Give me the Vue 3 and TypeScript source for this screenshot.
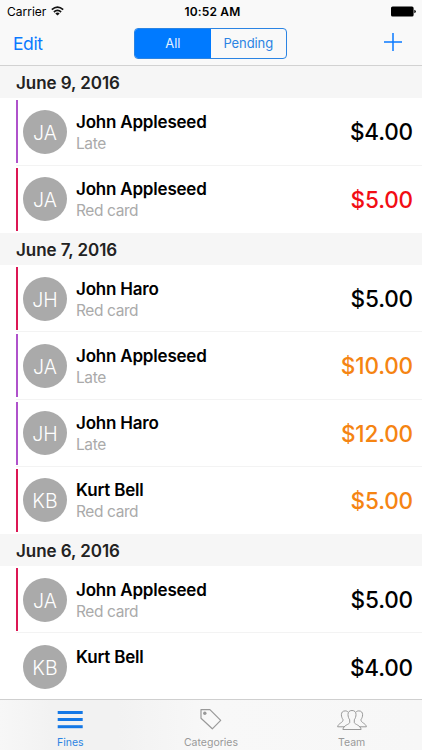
<template>
  <div class="screen">
    <header class="top">
      <div class="status">
        <div class="carrier">
          <span>Carrier</span>
          <svg class="wifi" width="13" height="10" viewBox="0 0 13 10" fill="none" stroke="#111" stroke-width="1.7">
            <path d="M0.8 3.7Q6.5 -1.5 12.2 3.7" />
            <path d="M2.9 6Q6.5 2.8 10.1 6" />
            <path d="M6.5 9.6L4.3 7.4Q6.5 5.7 8.7 7.4Z" fill="#111" stroke="none" />
          </svg>
        </div>
        <span class="clock">10:52 AM</span>
        <svg class="battery" width="25" height="11" viewBox="0 0 25 11">
          <rect x="0" y="0.5" width="22.6" height="10" rx="1.6" />
          <path d="M23.3 3.7Q24.9 4.2 24.9 5.5T23.3 7.3Z" />
        </svg>
      </div>

      <nav class="navbar">
        <button class="edit">Edit</button>
        <div class="segments">
          <button
            v-for="s in segments"
            :key="s"
            class="segment"
            :class="{ active: s === segment }"
            @click="segment = s"
          >
            {{ s }}
          </button>
        </div>
        <button class="add" aria-label="Add fine">
          <svg width="18" height="18" viewBox="0 0 18 18" stroke="#0a7aff" stroke-width="1.5">
            <path d="M9 0V18M0 9H18" />
          </svg>
        </button>
      </nav>
    </header>

    <main class="list">
      <section v-for="group in groups" :key="group.date">
        <h2 class="date">{{ group.date }}</h2>
        <article v-for="fine in group.fines" :key="fine.id" class="row">
          <div class="bar" :class="fine.kind" />
          <div class="avatar"><span>{{ initials(fine.name) }}</span></div>
          <div class="info">
            <div class="name">{{ fine.name }}</div>
            <div class="reason">{{ labels[fine.kind] }}</div>
          </div>
          <div class="amount" :class="fine.state">{{ fine.amount }}</div>
        </article>
      </section>
    </main>

    <!-- Tab bar -->
    <footer class="tabs">
      <button
        v-for="t in tabs"
        :key="t"
        class="tab"
        :class="{ active: t === tab }"
        @click="tab = t"
      >
        <svg v-if="t === 'Fines'" class="icon" width="30" height="24" viewBox="0 0 30 24" fill="#1478e6">
          <rect x="2.7" y="3" width="25" height="3" />
          <rect x="2.7" y="10" width="25" height="3" />
          <rect x="2.7" y="17.2" width="25" height="3" />
        </svg>
        <svg v-else-if="t === 'Categories'" class="icon" width="30" height="24" viewBox="0 0 30 24" fill="none" stroke="#999" stroke-width="1.2">
          <path d="M5 1.6H13.9L24.7 12.4L16.3 20.8L5 10.3Z" stroke-linejoin="round" />
          <circle cx="8.8" cy="5.2" r="1.7" fill="#999" stroke="none" />
        </svg>
        <svg v-else class="icon" width="30" height="24" viewBox="0 0 30 24" fill="none" stroke="#999" stroke-width="1" stroke-linejoin="round">
          <path d="M15 2.5C12.4 2.5 11 4 11 6.4C11 8.7 11.7 10.3 12.7 11.8V14.5C12.5 16.4 6.2 17.3 5.9 21.5H24.1C23.8 17.3 17.5 16.4 17.3 14.5V11.8C18.3 10.3 19 8.7 19 6.4C19 4 17.6 2.5 15 2.5Z" />
          <path d="M11.1 4.1C10.3 3.2 9.3 2.9 8.2 2.9C5.7 2.9 4.4 4.4 4.4 6.7C4.4 8.8 5.1 10.2 6 11.6C6.3 15 1.2 15 0.6 18.8H7.4" />
          <path d="M18.9 4.1C19.7 3.2 20.7 2.9 21.8 2.9C24.3 2.9 25.6 4.4 25.6 6.7C25.6 8.8 24.9 10.2 24 11.6C23.7 15 28.8 15 29.4 18.8H22.6" />
        </svg>
        <span class="tab-label">{{ t }}</span>
      </button>
    </footer>
  </div>
</template>

<script setup lang="ts">
import { ref } from 'vue'

type Kind = 'late' | 'red' | 'none'

interface Fine {
  id: number
  name: string
  kind: Kind
  amount: string
  state: 'paid' | 'overdue' | 'pending'
}

const labels: Record<Kind, string> = { late: 'Late', red: 'Red card', none: '' }

const segments = ['All', 'Pending']
const segment  = ref('All')
const tabs     = ['Fines', 'Categories', 'Team']
const tab      = ref('Fines')

const groups: { date: string; fines: Fine[] }[] = [
  {
    date: 'June 9, 2016',
    fines: [
      { id: 1, name: 'John Appleseed', kind: 'late', amount: '$4.00', state: 'paid' },
      { id: 2, name: 'John Appleseed', kind: 'red', amount: '$5.00', state: 'overdue' },
    ],
  },
  {
    date: 'June 7, 2016',
    fines: [
      { id: 3, name: 'John Haro', kind: 'red', amount: '$5.00', state: 'paid' },
      { id: 4, name: 'John Appleseed', kind: 'late', amount: '$10.00', state: 'pending' },
      { id: 5, name: 'John Haro', kind: 'late', amount: '$12.00', state: 'pending' },
      { id: 6, name: 'Kurt Bell', kind: 'red', amount: '$5.00', state: 'pending' },
    ],
  },
  {
    date: 'June 6, 2016',
    fines: [
      { id: 7, name: 'John Appleseed', kind: 'red', amount: '$5.00', state: 'paid' },
      { id: 8, name: 'Kurt Bell', kind: 'none', amount: '$4.00', state: 'paid' },
    ],
  },
]

function initials(name: string) {
  return name.split(' ').map(part => part[0]).join('')
}
</script>

<style>
body {
  margin: 0;
  overflow: hidden;
}
</style>

<style scoped>
.screen {
  display: flex;
  flex-direction: column;
  width: 422px;
  height: 750px;
  overflow: hidden;
  background: #fff;
  font-family: Inter, 'Liberation Sans', sans-serif;
  color: #000;
}

button {
  margin: 0; padding: 0;
  border: none;
  background: none;
  font: inherit;
  color: #0a7aff;
  cursor: pointer;
}

.top {
  flex: none;
  box-sizing: border-box;
  height: 66px;
  background: #f9f9f9;
  border-bottom: 1px solid #d2d2d2;
}

.status {
  display: grid;
  grid-template-columns: 1fr auto 1fr;
  align-items: center;
  height: 22px;
  padding: 0 6px 0 7px;
  font-size: 12px;
}
.carrier { display: flex; align-items: center; gap: 5px; }
.clock { padding-left: 2px; font-weight: 600; letter-spacing: 0.15px; }
.battery { justify-self: end; }

.navbar {
  display: grid;
  grid-template-columns: 1fr 153px 1fr;
  align-items: center;
  height: 42px;
  padding: 0 20px 0 13px;
}
.edit { justify-self: start; font-size: 17.5px; letter-spacing: -0.4px; }
.add { justify-self: end; height: 18px; margin-top: -2px; }

.segments {
  display: flex;
  box-sizing: border-box;
  height: 31px;
  margin-left: 3px;
  margin-right: -3px;
  border: 1px solid #2b84e3;
  border-radius: 4px;
  overflow: hidden;
}
.segment { flex: 1; font-size: 13px; letter-spacing: -0.1px; color: #2b84e3; }
.segment.active { background: #007aff; color: #e4f2ff; }

.list { flex: 1; min-height: 0; overflow: hidden; }

.date {
  box-sizing: border-box;
  height: 32.4px;
  margin: 0;
  padding-left: 16px;
  background: #f6f6f6;
  font-size: 17px; font-weight: 600;
  line-height: 34px;
  letter-spacing: -0.06px;
  color: #222;
}

.row {
  display: flex;
  align-items: center;
  height: 67.2px;
  padding: 0 9px 0 16px;
  background: linear-gradient(#f3f3f3, #f3f3f3) 16px 100% / 100% 1px no-repeat;
}
.row:last-child { background: none; }

.bar { width: 2px; height: 63px; }
.bar.late { background: #af52cb; }
.bar.red { background: #dc1754; }

.avatar {
  display: flex;
  align-items: center;
  justify-content: center;
  width: 44px;
  height: 44px;
  margin: 0 9px 0 5px;
  border-radius: 50%;
  background: #aaa;
  color: #fff;
  font-size: 19.5px; font-weight: 300;
}
.avatar span { padding-top: 2px; }

.info { flex: 1; padding-top: 1px; }
.name { font-size: 17px; font-weight: 600; line-height: 22px; letter-spacing: -0.2px; }
.reason { height: 21px; font-size: 15.5px; line-height: 21px; letter-spacing: -0.4px; color: #aaa; }

.amount { font-size: 22.5px; font-weight: 500; letter-spacing: -0.15px; }
.amount.overdue { color: #f20d14; }
.amount.pending { color: #f58412; }

.tabs {
  display: flex;
  flex: none;
  box-sizing: border-box;
  height: 51px;
  background: linear-gradient(90deg, #f7f7f7, #f2f2f2 12%, #f2f2f2 28%, #f8f8f8 50%, #f7f7f7);
  border-top: 1px solid #cfcfcf;
}
.tab {
  display: flex;
  flex: 1;
  flex-direction: column;
  align-items: center;
  padding-top: 8px;
  color: #999;
}
.icon { display: block; }
.tab-label { margin-top: 4px; font-size: 10.5px; line-height: 13px; }
.tab.active { color: #2b84e3; }
</style>
